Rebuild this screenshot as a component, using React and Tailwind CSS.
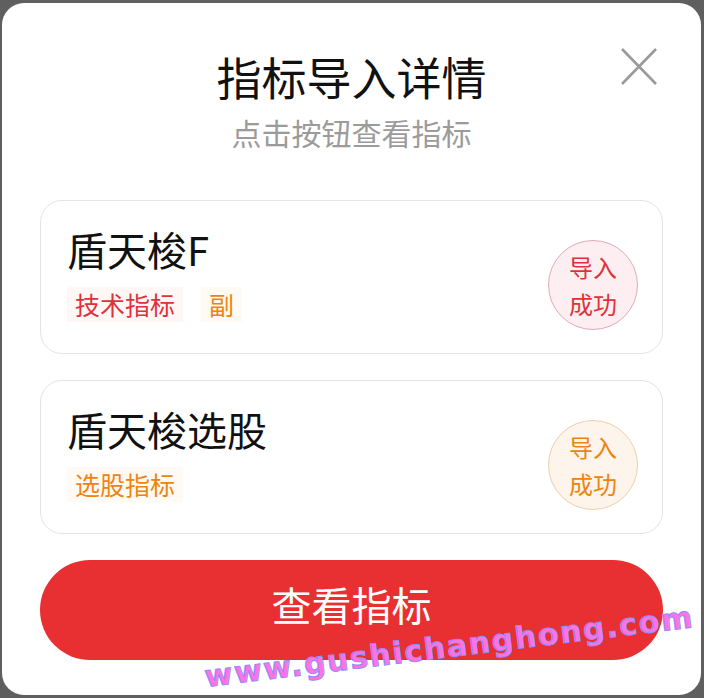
import React from "react";

const cjk = { fontFamily: '"Noto Sans CJK SC", "Noto Sans", sans-serif' };

function Tag({ children, tone }) {
  const cls =
    tone === "red"
      ? "text-[#e0313a] bg-[#fff6f6]"
      : "text-[#ee8410] bg-[#fffaf3]";
  return (
    <span className={`px-[8px] h-[35px] flex items-center text-[25px] leading-none ${cls}`}>
      {children}
    </span>
  );
}

function Badge({ tone }) {
  const cls =
    tone === "red"
      ? "border-[#dfaab8] bg-[#fdeff1] text-[#e0313a]"
      : "border-[#efcfad] bg-[#fdf4eb] text-[#ee8410]";
  return (
    <div
      className={`w-[90px] h-[90px] shrink-0 rounded-full border flex flex-col items-center justify-center text-[24px] leading-[37px] mt-[16px] ${cls}`}
    >
      <span>导入</span>
      <span>成功</span>
    </div>
  );
}

function Card({ title, tags, tone }) {
  return (
    <div className="h-[154px] rounded-[22px] border border-[#e4e4e4] bg-white flex items-center justify-between pl-[26px] pr-[24px]">
      <div className="flex flex-col self-start pt-[24px]">
        <div className="text-[40px] leading-[48px] text-[#111]">{title}</div>
        <div className="flex gap-[18px] mt-[14px]">
          {tags.map((t) => (
            <Tag key={t.text} tone={t.tone}>
              {t.text}
            </Tag>
          ))}
        </div>
      </div>
      <Badge tone={tone} />
    </div>
  );
}

export default function App() {
  return (
    <div
      className="relative w-[704px] h-[698px] bg-[#5f5f5f] pt-[3px] pb-[3px] pl-[2px] pr-[3px] overflow-hidden"
      style={cjk}
    >
      <div className="relative h-full bg-white rounded-[22px] flex flex-col pt-[47px] px-[38px]">
        <svg
          className="absolute top-[45px] right-[44px]"
          width="36"
          height="37"
          viewBox="0 0 36 37"
        >
          <path d="M1 1 L35 36 M35 1 L1 36" stroke="#9a9a9a" strokeWidth="2.6" fill="none" />
        </svg>
        <div className="text-center text-[45px] leading-[54px] text-[#111]">指标导入详情</div>
        <div className="text-center text-[30px] leading-[36px] text-[#9b9b9b] mt-[10px]">
          点击按钮查看指标
        </div>
        <div className="flex flex-col gap-[26px] mt-[50px]">
          <Card
            title="盾天梭F"
            tone="red"
            tags={[
              { text: "技术指标", tone: "red" },
              { text: "副", tone: "orange" },
            ]}
          />
          <Card title="盾天梭选股" tone="orange" tags={[{ text: "选股指标", tone: "orange" }]} />
        </div>
        <button className="mt-[26px] h-[100px] w-full rounded-full bg-[#e83033] text-white text-[40px] leading-none flex items-center justify-center pb-[12px]">
          查看指标
        </button>
      </div>
      <div
        className="absolute left-[203px] top-[624px] w-max text-[30px] font-bold tracking-[1.8px] text-[#ff72e0] [-webkit-text-stroke:1px_#8f8cff] rotate-[-7deg] origin-center whitespace-nowrap pointer-events-none"
        style={{ fontFamily: '"DejaVu Sans", sans-serif' }}
      >
        www.gushichanghong.com
      </div>
    </div>
  );
}
